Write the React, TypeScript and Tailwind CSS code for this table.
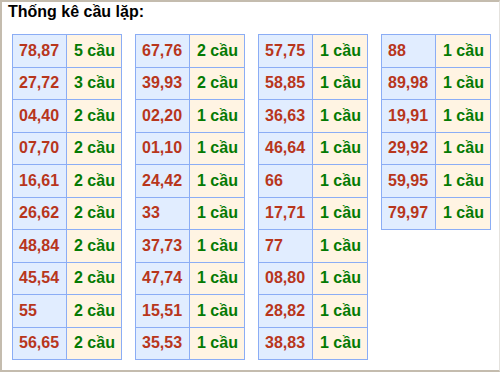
const groups: [string, number][][] = [
  [
    ["78,87", 5], ["27,72", 3], ["04,40", 2], ["07,70", 2], ["16,61", 2],
    ["26,62", 2], ["48,84", 2], ["45,54", 2], ["55", 2], ["56,65", 2],
  ],
  [
    ["67,76", 2], ["39,93", 2], ["02,20", 1], ["01,10", 1], ["24,42", 1],
    ["33", 1], ["37,73", 1], ["47,74", 1], ["15,51", 1], ["35,53", 1],
  ],
  [
    ["57,75", 1], ["58,85", 1], ["36,63", 1], ["46,64", 1], ["66", 1],
    ["17,71", 1], ["77", 1], ["08,80", 1], ["28,82", 1], ["38,83", 1],
  ],
  [
    ["88", 1], ["89,98", 1], ["19,91", 1], ["29,92", 1], ["59,95", 1], ["79,97", 1],
  ],
];

function CauTable({ rows }: { rows: [string, number][] }) {
  return (
    <table className="w-[110px] border-collapse self-start">
      <tbody>
        {rows.map(([pair, count]) => (
          <tr key={pair}>
            <td className="w-[54px] h-[32.5px] border border-[#8badf5] bg-[#e1edff] pl-[6px] text-[#b8361c]">
              {pair}
            </td>
            <td className="h-[32.5px] border border-[#8badf5] bg-[#fff4e3] pl-[7px] text-[#047a04]">
              {count} cầu
            </td>
          </tr>
        ))}
      </tbody>
    </table>
  );
}

export default function App() {
  return (
    <div className="w-[500px] h-[372px] bg-white border-t-2 border-l-2 border-b-2 border-r border-t-[#c4bcae] border-l-[#c4bcae] border-b-[#c4bcae] border-r-[#e4e2de] font-['Liberation_Sans',Arial,sans-serif] font-bold text-[16px]">
      <div className="pl-[6px] pt-[1px] leading-[18px] text-black">Thống kê cầu lặp:</div>
      <div className="mt-[13px] pl-[10px] flex gap-[13px] leading-[18px]">
        {groups.map((g, i) => (
          <CauTable key={i} rows={g} />
        ))}
      </div>
    </div>
  );
}
